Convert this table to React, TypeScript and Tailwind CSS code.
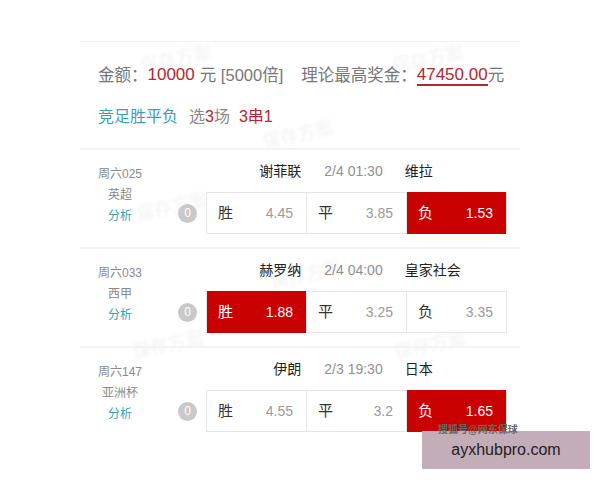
import React from "react";

type Odd = { label: string; value: string; on: boolean };
type Match = {
  code: string;
  league: string;
  home: string;
  time: string;
  away: string;
  odds: Odd[];
};

const matches: Match[] = [
  {
    code: "周六025",
    league: "英超",
    home: "谢菲联",
    time: "2/4 01:30",
    away: "维拉",
    odds: [
      { label: "胜", value: "4.45", on: false },
      { label: "平", value: "3.85", on: false },
      { label: "负", value: "1.53", on: true },
    ],
  },
  {
    code: "周六033",
    league: "西甲",
    home: "赫罗纳",
    time: "2/4 04:00",
    away: "皇家社会",
    odds: [
      { label: "胜", value: "1.88", on: true },
      { label: "平", value: "3.25", on: false },
      { label: "负", value: "3.35", on: false },
    ],
  },
  {
    code: "周六147",
    league: "亚洲杯",
    home: "伊朗",
    time: "2/3 19:30",
    away: "日本",
    odds: [
      { label: "胜", value: "4.55", on: false },
      { label: "平", value: "3.2", on: false },
      { label: "负", value: "1.65", on: true },
    ],
  },
];

function MatchRow({ m, last }: { m: Match; last: boolean }) {
  return (
    <div
      className={
        "flex h-[99px] " + (last ? "" : "border-b-2 border-[#f2f2f2]")
      }
    >
      <div className="ml-[18px] flex w-[44px] flex-col items-center whitespace-nowrap pt-[14px] text-center text-[12px] leading-[21px]">
        <div className="text-[#8a8a8a]">{m.code}</div>
        <div className="text-[#8a8a8a]">{m.league}</div>
        <div className="text-[#3a9fb2]">分析</div>
      </div>
      <div className="flex flex-col pt-[11px]">
        <div className="ml-[64px] grid h-[20px] w-[301px] grid-cols-3 items-center whitespace-nowrap text-[14px] leading-[20px]">
          <div className="pr-[5px] text-right text-[#222]">{m.home}</div>
          <div className="pr-[6px] text-center text-[#8f8f8f]">{m.time}</div>
          <div className="-ml-[2px] text-[#222]">{m.away}</div>
        </div>
        <div className="mt-[11px] flex items-center">
          <div className="ml-[36px] flex h-[19px] w-[19px] items-center justify-center rounded-full bg-[#c9c9c9] text-[12px] text-white">
            0
          </div>
          <div className="ml-[9px] flex h-[42px] w-[301px] border border-[#e6e6e6]">
            {m.odds.map((o, i) => (
              <div
                key={i}
                className={
                  "flex flex-1 items-center justify-between pl-[11px] pr-[13px] " +
                  (i > 0 ? "border-l border-[#e6e6e6] " : "") +
                  (o.on ? "bg-[#c90000] -my-px" : "bg-white")
                }
              >
                <span
                  className={
                    "text-[15px] " + (o.on ? "text-white" : "text-[#333]")
                  }
                >
                  {o.label}
                </span>
                <span
                  className={
                    "text-[14px] " + (o.on ? "text-white" : "text-[#9a9a9a]")
                  }
                >
                  {o.value}
                </span>
              </div>
            ))}
          </div>
        </div>
      </div>
    </div>
  );
}

const wm =
  "pointer-events-none absolute rotate-[-12deg] text-[18px] font-bold text-[#f6f6f6] blur-[1px]";

export default function App() {
  return (
    <div
      className="relative h-[480px] w-[600px] overflow-hidden bg-white"
      style={{
        fontFamily:
          '"Liberation Sans", "Noto Sans CJK SC", "Noto Sans", sans-serif',
      }}
    >
      {/* faint watermarks */}
      <div className={wm + " left-[140px] top-[46px]"}>保存方案</div>
      <div className={wm + " left-[392px] top-[46px]"}>保存方案</div>
      <div className={wm + " left-[262px] top-[122px]"}>保存方案</div>
      <div className={wm + " left-[136px] top-[194px]"}>保存方案</div>
      <div className={wm + " left-[270px] top-[262px]"}>保存方案</div>
      <div className={wm + " left-[132px] top-[332px]"}>保存方案</div>
      <div className={wm + " left-[394px] top-[332px]"}>保存方案</div>

      <div className="relative ml-[80px] w-[440px] pt-[41px]">
        <div className="border-t border-[#f0f0f0]" />
        <div className="h-[108px] border-b-2 border-[#f2f2f2] pl-[18px]">
          <div className="box-content flex h-[24px] items-center whitespace-nowrap pt-[21px] text-[16.5px] leading-[24px]">
            <span className="text-[#777]">金额：</span>
            <span className="text-[17px] text-[#b3262d]">10000</span>
            <span className="ml-[5px] text-[#777]">元 [5000倍]</span>
            <span className="ml-[18px] text-[#777]">理论最高奖金：</span>
            <span className="border-b-2 border-[#b3262d] text-[17px] leading-[19px] text-[#b3262d]">
              47450.00
            </span>
            <span className="text-[#777]">元</span>
          </div>
          <div className="mt-[18px] flex h-[24px] items-center whitespace-nowrap text-[16px] leading-[24px]">
            <span className="text-[#3a9fb2]">竞足胜平负</span>
            <span className="ml-[11px] text-[#888]">选</span>
            <span className="text-[#b3262d]">3</span>
            <span className="text-[#888]">场</span>
            <span className="ml-[9px] text-[#b3262d]">3串1</span>
          </div>
        </div>
        {matches.map((m, i) => (
          <MatchRow key={i} m={m} last={i === matches.length - 1} />
        ))}
      </div>

      {/* overlay watermark */}
      <div className="absolute left-[422px] top-[431px] flex h-[38px] w-[168px] items-center justify-center bg-[#c3adb9] text-[16px] text-[#222]">
        ayxhubpro.com
      </div>
      <div className="absolute left-[438px] top-[424px] text-[10px] font-bold leading-[12px] text-[#666]">
        搜狐号@网东保球
      </div>
    </div>
  );
}
